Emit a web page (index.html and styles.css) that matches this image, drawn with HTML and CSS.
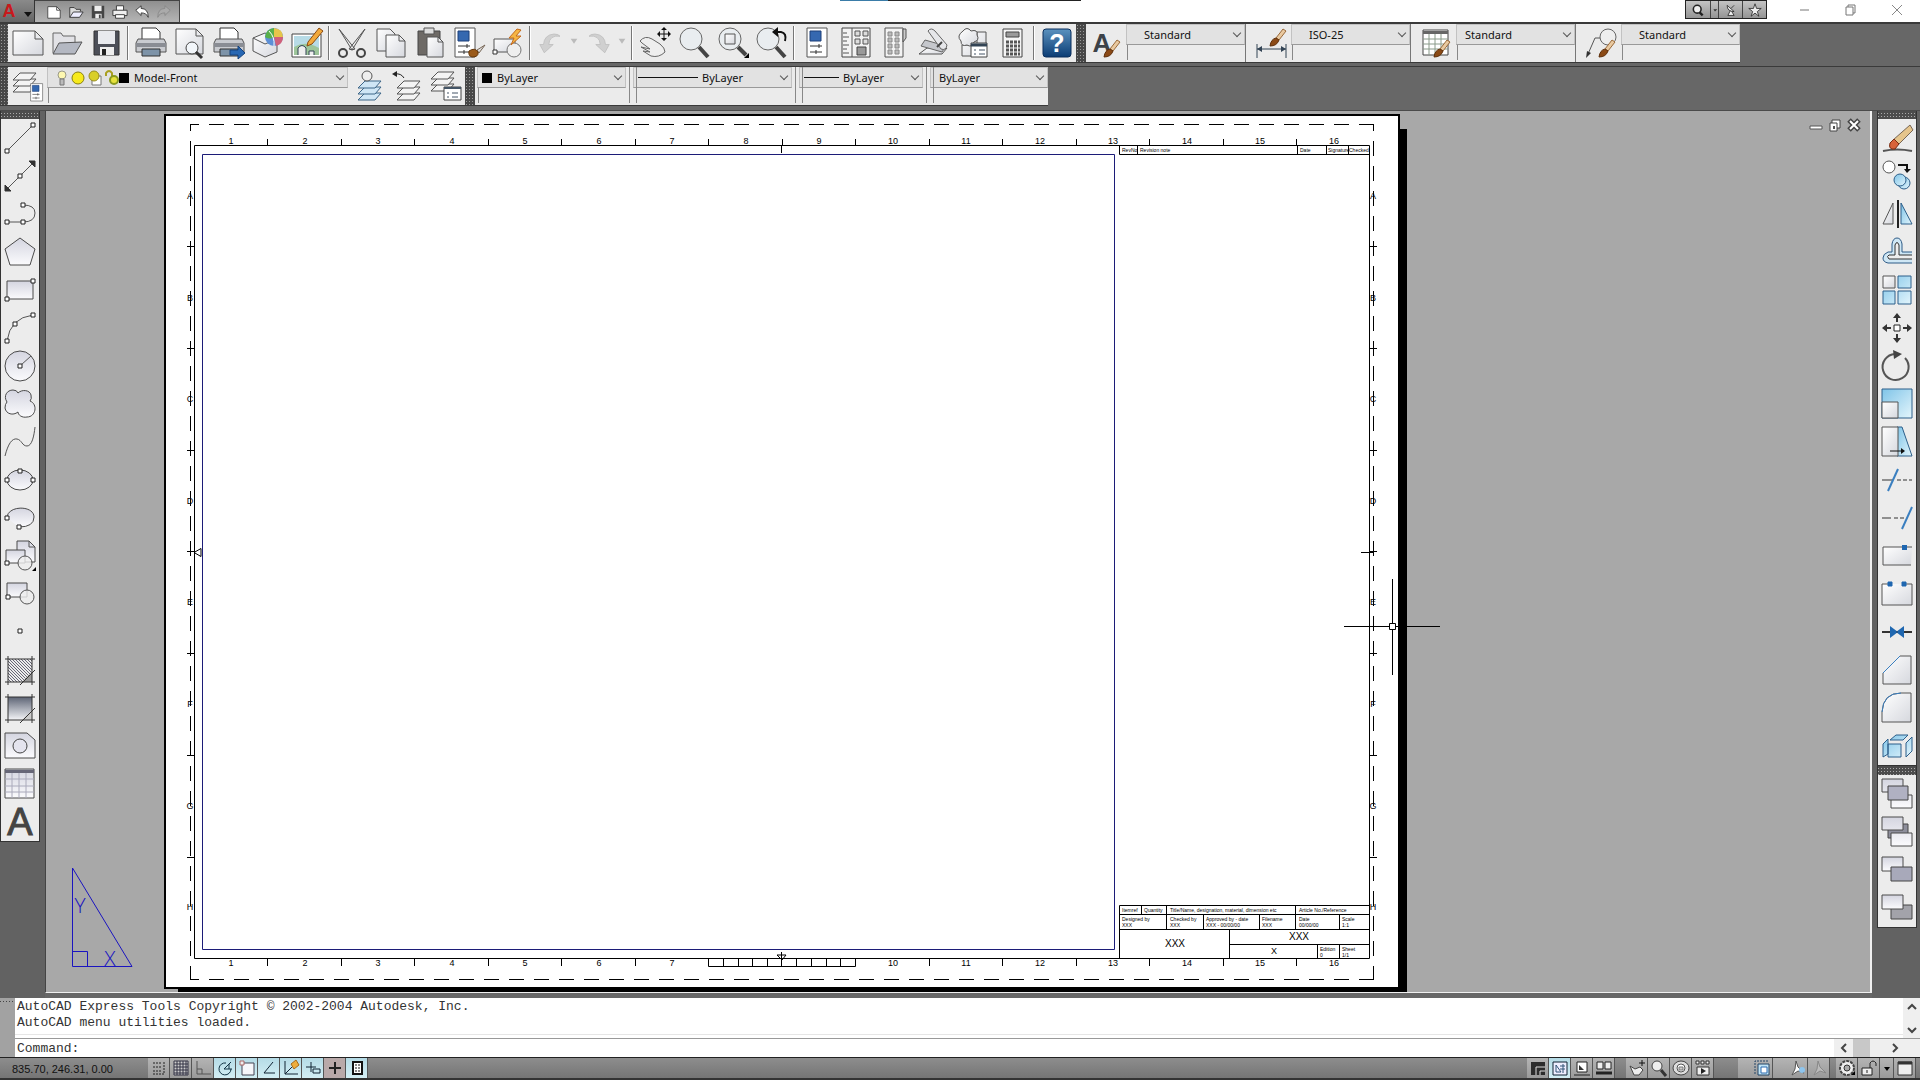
FILE: index.html
```html
<!DOCTYPE html>
<html lang="en">
<head>
    <meta charset="UTF-8">
    <meta name="viewport" content="width=device-width, initial-scale=1.0">
    <title>AutoCAD</title>
    <link rel="stylesheet" href="styles.css">
</head>
<body>
    <!-- Shared gradients and small symbols -->
    <svg class="defs" aria-hidden="true">
        <defs>
            <linearGradient id="paper" x1="0" y1="0" x2="1" y2="1"><stop offset="0" stop-color="#fff"/><stop offset="1" stop-color="#d6d8de"/></linearGradient>
            <linearGradient id="shade" x1="0" y1="0" x2="0" y2="1"><stop offset="0" stop-color="#d4d5e0"/><stop offset="1" stop-color="#fbfbfd"/></linearGradient>
            <linearGradient id="sky" x1="0" y1="0" x2="1" y2="1"><stop offset="0" stop-color="#7fc4e8"/><stop offset="1" stop-color="#e3f5fc"/></linearGradient>
            <linearGradient id="steel" x1="0" y1="0" x2="0" y2="1"><stop offset="0" stop-color="#5d6475"/><stop offset="1" stop-color="#f4f5f8"/></linearGradient>
            <linearGradient id="help" x1="0" y1="0" x2="0" y2="1"><stop offset="0" stop-color="#5b92bf"/><stop offset="1" stop-color="#0b3c74"/></linearGradient>
            <pattern id="hatch" width="3" height="3" patternUnits="userSpaceOnUse"><path d="M0 0l3 3" stroke="#667" stroke-width="1"/></pattern>
            <g id="brush"><path d="M13 0L6 9l3 2L16 2z" fill="#e9c9a0" stroke="#9a6a3a" stroke-width="1"/><path d="M6 9q-5 1-6 8 7 0 9-6z" fill="#8b4a16" stroke="#5e300c" stroke-width="1"/></g>
            <g id="layers"><path d="M8 17h16l-6 7H1z"/><path d="M8 11h16l-6 7H1z"/><path d="M8 5h16l-6 7H1z"/></g>
            <g id="printer"><path d="M7 1h14l4 4v8H7z" fill="#fff" stroke="#333"/><path d="M3 12h26l2 4v9H1v-9z" fill="#c9cbd0" stroke="#555"/><path d="M1 16h30v4H1z" fill="#8a8d94" stroke="none"/><path d="M7 22h18v7H7z" fill="#7d93a8" stroke="#333"/></g>
            <g id="palette"><path d="M6 1h20v29H6z" fill="#fff" stroke="#555"/><path d="M9 4h11v10H9z" fill="#3568b0" stroke="#1d3f78"/><path d="M9 19h12M18 17v4M9 25h12M15 23v4" stroke="#333"/></g>
        </defs>
    </svg>

    <header class="titlebar">
        <button class="app" aria-label="Application menu">
            <span class="logo">A</span>
            <svg width="8" height="6" viewBox="0 0 8 6"><path d="M0 0h8l-4 5z" fill="#111"/></svg>
        </button>
        <div class="quick">
            <button aria-label="New"><svg viewBox="0 0 18 18"><path d="M2 3h10l4 4v9H2z" fill="#fff" stroke="#444"/><path d="M12 3v4h4" fill="none" stroke="#444"/></svg></button>
            <button aria-label="Open"><svg viewBox="0 0 18 18"><path d="M2 15V4h5l2 2h5v2" fill="#ddd" stroke="#333"/><path d="M2 15l4-6h11l-4 6z" fill="#eef" stroke="#333"/></svg></button>
            <button aria-label="Save"><svg viewBox="0 0 18 18"><path d="M2 2h14v14H2z" fill="#444"/><path d="M5 2h8v6H5z" fill="#eee"/><path d="M6 11h7v5H6z" fill="#eee"/><path d="M10 12h2v4h-2z" fill="#444"/></svg></button>
            <button aria-label="Plot"><svg viewBox="0 0 18 18"><path d="M5 2h8v6H5z" fill="#fff" stroke="#333"/><path d="M1 7h16v6H1z" fill="#eee" stroke="#333"/><path d="M4 12h10v4H4z" fill="#fff" stroke="#333"/></svg></button>
            <button aria-label="Undo"><svg viewBox="0 0 18 18"><path d="M2 7l6-5v3q8 0 8 10-2-5-8-5v3z" fill="#fff" stroke="#333"/></svg></button>
            <button aria-label="Redo"><svg viewBox="0 0 18 18"><path d="M16 7l-6-5v3Q2 5 2 15q2-5 8-5v3z" fill="#aaa" stroke="#888"/></svg></button>
        </div>
        <div class="topline"><span></span></div>
        <div class="info">
            <button class="wide" aria-label="Search"><svg viewBox="0 0 18 18"><circle cx="8" cy="8" r="5" fill="#eee" stroke="#222" stroke-width="2"/><path d="M11 12l4 4" stroke="#222" stroke-width="3"/></svg></button>
            <button class="thin" aria-label="Search options"><svg viewBox="0 0 6 18"><path d="M1 8h5l-3 3z" fill="#333"/></svg></button>
            <button class="wide" aria-label="Communication center"><svg viewBox="0 0 18 18"><path d="M4 3q0 8 9 8zM9 7l4-4M8 10l-3 6h8l-3-5" fill="#eee" stroke="#222"/></svg></button>
            <button class="wide" aria-label="Favorites"><svg viewBox="0 0 18 18"><path d="M9 1l2 6h6l-5 4 2 6-5-4-5 4 2-6-5-4h6z" fill="#eee" stroke="#222"/></svg></button>
        </div>
        <div class="winbtns">
            <button aria-label="Minimize"><svg viewBox="0 0 12 12"><path d="M1 6h9" stroke="#777"/></svg></button>
            <button aria-label="Restore"><svg viewBox="0 0 12 12"><path d="M1 3h7v8H1zM3 3V1h7v8H8" fill="none" stroke="#777"/></svg></button>
            <button aria-label="Close"><svg viewBox="0 0 12 12"><path d="M1 1l10 10M11 1L1 11" stroke="#888"/></svg></button>
        </div>
    </header>

    <div class="bars">
        <div class="bar">
            <i class="grip"></i>
            <div class="tools">
                <button aria-label="New"><svg viewBox="0 0 32 32"><path class="w" d="M1 4h22l8 8v16H1z"/><path class="l" d="M23 4v8h8"/></svg></button>
                <button aria-label="Open"><svg viewBox="0 0 32 32"><path d="M2 26V6h8l2 3h12v8" fill="#e2e2e6" stroke="#666"/><path d="M2 27l6-11 23-1-7 12z" fill="#b4b8c2" stroke="#555"/></svg></button>
                <button aria-label="Save"><svg viewBox="0 0 32 32"><path d="M4 4h25v24H4z" fill="#4c4f58" stroke="#333"/><path d="M8 4h17v13H8z" fill="#e8eaee"/><path d="M10 20h14v8H10z" fill="#eee"/><path d="M12 22h4v6h-4z" fill="#222"/></svg></button>
                <i class="sep"></i>
                <button aria-label="Plot"><svg viewBox="0 0 32 32"><use href="#printer"/></svg></button>
                <button aria-label="Plot preview"><svg viewBox="0 0 32 32"><path class="w" d="M2 2h20l7 7v18H2z"/><path class="l" d="M22 2v7h7"/><circle cx="18" cy="21" r="6" fill="#f2f6fa" stroke="#444"/><path d="M22 25l6 6" stroke="#333" stroke-width="3"/></svg></button>
                <button aria-label="Publish"><svg viewBox="0 0 32 32"><use href="#printer"/><path d="M17 23h8v-4l7 7-7 6v-4h-8z" fill="#2767b3" stroke="#17437c"/></svg></button>
                <button aria-label="3DDWF"><svg viewBox="0 0 32 32"><path class="w" d="M1 11l12-5 12 6v13l-12 5-12-6z"/><path class="l" d="M1 11l12 6 12-5"/><circle cx="22" cy="10" r="9" fill="#5d8fd6"/><path d="M22 1q-8 1-9 9 5 3 9 0z" fill="#58b04a"/><path d="M22 1q9 1 9 9l-9 0z" fill="#e6c54a"/><path d="M31 10q0 7-7 9l-2-9z" fill="#d0607a"/><path d="M17 4q6 6 5 15" fill="none" stroke="#fff"/></svg></button>
                <button aria-label="Sheet set"><svg viewBox="0 0 32 32"><path d="M1 7h29v23H1z" fill="#fff" stroke="#444"/><path d="M3 9h25v19H3z" fill="#b7dbe6"/><path d="M3 20q12-7 25 1v7H3z" fill="#9dc59a"/><path d="M7 28v-7q4-5 8 0v7M18 28v-4h5v4" fill="#eee" stroke="#345"/><path d="M17 15l11-14 4 3-11 13-5 2z" fill="#f2a93b" stroke="#8a4a12"/></svg></button>
                <i class="sep"></i>
                <button aria-label="Cut"><svg viewBox="0 0 32 32"><path d="M3 2l16 20-3 1zM29 2L13 22l3 1z" fill="#ececec" stroke="#555"/><circle cx="7" cy="26" r="4" fill="none" stroke="#444" stroke-width="2"/><circle cx="25" cy="26" r="4" fill="none" stroke="#444" stroke-width="2"/></svg></button>
                <button aria-label="Copy"><svg viewBox="0 0 32 32"><path class="w" d="M2 2h13l5 5v17H2z"/><path class="w" d="M11 8h13l6 6v16H11z"/><path class="l" d="M24 8v6h6"/></svg></button>
                <button aria-label="Paste"><svg viewBox="0 0 32 32"><path d="M4 4h22v24H4z" fill="#6e6a66" stroke="#444"/><path d="M10 1h10v6H10z" fill="#ddd" stroke="#555"/><path class="w" d="M13 10h11l5 5v15H13z"/><path class="l" d="M24 10v5h5"/></svg></button>
                <button aria-label="Match properties"><svg viewBox="0 0 32 32"><g transform="translate(-4 0)"><use href="#palette"/></g><path d="M32 18l-8 5 2 3z" fill="#ddd" stroke="#765"/><path d="M16 24q6-4 9 1 1 5-6 5-4-1-3-6z" fill="#9a5a1a" stroke="#653608"/></svg></button>
                <button aria-label="Block editor"><svg viewBox="0 0 32 32"><path class="w" d="M2 12h21v13H2z"/><circle cx="22" cy="23" r="7" fill="#eee" stroke="#777"/><path d="M25 2l-8 9h5l-3 7 10-9h-5l5-6z" fill="#f5b544" stroke="#c46a1c"/><path d="M1 23h4v4H1z" fill="#fff" stroke="#333"/></svg></button>
                <i class="sep"></i>
                <button class="hist" aria-label="Undo"><svg viewBox="0 0 32 32"><path d="M7 29L1 18h5Q7 5 20 4q6 0 8 3-14-2-15 11h6z" fill="#d0d0d0" stroke="#bbb"/></svg></button>
                <button class="drop" aria-label="Undo list"><svg viewBox="0 0 12 32"><path d="M2 11h8l-4 6z" fill="#bbb"/></svg></button>
                <button class="hist" aria-label="Redo"><svg viewBox="0 0 32 32"><path d="M25 29l6-11h-5Q25 5 12 4 6 4 4 7q14-2 15 11h-6z" fill="#d0d0d0" stroke="#bbb"/></svg></button>
                <button class="drop last" aria-label="Redo list"><svg viewBox="0 0 12 32"><path d="M2 11h8l-4 6z" fill="#bbb"/></svg></button>
                <i class="sep"></i>
                <button aria-label="Pan"><svg viewBox="0 0 32 32"><path d="M1 14q5-6 12-2l8 5q5 4 5 8-6 6-14 4L4 24l7 1-9-5 9 2-8-6z" fill="#eee" stroke="#666"/><path d="M25 1v12M19 7h12" stroke="#111"/><path d="M25 0l-3 3h6zM25 14l-3-3h6zM18 7l3-3v6zM32 7l-3-3v6z" fill="#111"/></svg></button>
                <button aria-label="Zoom realtime"><svg viewBox="0 0 32 32"><path d="M21 20l9 10" stroke="#444" stroke-width="4"/><circle cx="13" cy="12" r="11" fill="#e9edf0" stroke="#666"/></svg></button>
                <button aria-label="Zoom window"><svg viewBox="0 0 32 32"><path d="M21 20l8 8" stroke="#444" stroke-width="4"/><circle cx="13" cy="12" r="11" fill="#e9edf0" stroke="#666"/><path class="w" d="M8 7h10v10H8z"/><path d="M32 26v5h-5z" fill="#000"/></svg></button>
                <button aria-label="Zoom previous"><svg viewBox="0 0 32 32"><path d="M20 20l9 10" stroke="#444" stroke-width="4"/><circle cx="12" cy="12" r="11" fill="#e9edf0" stroke="#666"/><path d="M20 5h5q6 1 4 9" fill="none" stroke="#111" stroke-width="2"/><path d="M22 0v10l-6-5z" fill="#111"/></svg></button>
                <i class="sep"></i>
                <button aria-label="Properties"><svg viewBox="0 0 32 32"><use href="#palette"/></svg></button>
                <button aria-label="DesignCenter"><svg viewBox="0 0 32 32"><path d="M2 1h28v29H2z" fill="#f3f3f3" stroke="#444"/><path d="M12 1v29M3 6h4M3 10h6M3 14h4M3 18h6M3 22h4M3 26h6" stroke="#555"/><path d="M15 4h5v5h-5zM23 4h5v5h-5zM15 12h5v5h-5zM23 12h5v5h-5z" fill="#ddd" stroke="#555"/><path d="M17 20h9v8h-9z" fill="#999" stroke="#444"/></svg></button>
                <button aria-label="Tool palettes"><svg viewBox="0 0 32 32"><path d="M6 1h18v29H6z" fill="#f3f3f3" stroke="#555"/><path d="M24 2h3v9l-3 4z" fill="#ccc" stroke="#555"/><path d="M9 5h4v4H9zM16 5h4v4h-4zM9 11h4v4H9zM16 11h4v4h-4zM9 17h4v4H9zM16 17h4v4h-4zM9 23h4v4H9zM16 23h4v4h-4z" fill="#bbb" stroke="#888"/></svg></button>
                <button aria-label="Sheet set manager"><svg viewBox="0 0 32 32"><path class="w" d="M1 27l8-6h20l-5 6z"/><path d="M3 19l4-6 21 6-4 6z" fill="#c5c7cc" stroke="#666"/><path d="M10 4q3-4 7 0l12 14q-1 6-6 4z" fill="#e6e7ea" stroke="#666"/><path d="M24 15l-5 5" stroke="#444" stroke-width="2"/></svg></button>
                <button aria-label="Markup set manager"><svg viewBox="0 0 32 32"><path class="w" d="M20 5h9v14h-9zM5 18h12v11H5z"/><path class="w" d="M6 4q4-5 8 0 7-2 6 4 3 5-3 7-2 6-7 3-6 2-6-4-5-5 2-10z"/><path d="M14 16h16v14H14z" fill="#fff" stroke="#444"/><path d="M14 18h16" stroke="#345" stroke-width="3"/><path d="M17 23h2M22 23h6M17 27h2M22 27h6" stroke="#456"/></svg></button>
                <button aria-label="QuickCalc"><svg viewBox="0 0 32 32"><path d="M7 2h19v28H7z" fill="#f5f5f5" stroke="#444"/><path d="M10 5h13v5H10z" fill="#9a9a9a" stroke="#444"/><path d="M10 15h14M10 19h14M10 23h14M10 27h14" stroke="#555" stroke-width="3" stroke-dasharray="3 1"/></svg></button>
                <i class="sep"></i>
                <button aria-label="Help"><svg viewBox="0 0 32 32"><rect x="2" y="2" width="28" height="28" rx="3" fill="url(#help)" stroke="#0a2f5c"/><text class="qmark" x="16" y="25">?</text></svg></button>
            </div>
            <i class="grip mid"></i>
            <div class="tools styles">
                <button aria-label="Text style"><svg viewBox="0 0 32 32"><text class="glyph" x="12" y="25">A</text><use href="#brush" x="14" y="13"/></svg></button>
                <label class="field"><select aria-label="Text style"><option>Standard</option></select></label>
                <button aria-label="Dimension style"><svg viewBox="0 0 32 32"><path d="M2 17v14M31 17v14M2 22h29" stroke="#345"/><path d="M2 22l5-3v6zM31 22l-5-3v6z" fill="#345"/><use href="#brush" x="15" y="2"/></svg></button>
                <label class="field"><select aria-label="Dimension style"><option>ISO-25</option></select></label>
                <button aria-label="Table style"><svg viewBox="0 0 32 32"><path d="M3 3h25v25H3z" fill="#fff" stroke="#444"/><path d="M3 4h25v3H3z" fill="#666"/><path d="M3 12h25M3 17h25M3 22h25M9 7v21M15 7v21M21 7v21" stroke="#8a9a8a"/><use href="#brush" x="14" y="13"/></svg></button>
                <label class="field near"><select aria-label="Table style"><option>Standard</option></select></label>
                <button aria-label="Multileader style"><svg viewBox="0 0 32 32"><circle cx="23" cy="10" r="8" fill="#eee" stroke="#666"/><path d="M15 11h-5L3 27" fill="none" stroke="#555"/><path d="M1 31l1-7 4 2z" fill="#333"/><use href="#brush" x="14" y="13"/></svg></button>
                <label class="field"><select aria-label="Multileader style"><option>Standard</option></select></label>
            </div>
        </div>

        <div class="bar">
            <i class="grip"></i>
            <div class="tools">
                <button aria-label="Layer properties"><svg viewBox="0 0 32 32"><g class="stack"><use href="#layers" y="-2"/></g><g transform="translate(15 13) scale(.6)"><use href="#palette"/></g></svg></button>
                <label class="field layer">
                    <svg width="64" height="18" viewBox="0 0 64 18"><circle cx="7" cy="6" r="4" fill="#fdf7b0" stroke="#998"/><path d="M5 10h4v6H5z" fill="#bbb" stroke="#777"/><circle cx="23" cy="9" r="6" fill="#f7ea1c" stroke="#887f10"/><path d="M37 7h9v9h-9z" fill="#fff" stroke="#777"/><circle cx="39" cy="7" r="5" fill="#d9cf2a" stroke="#998f20"/><path d="M51 7V4q3-4 6 0v4" fill="none" stroke="#aaa020" stroke-width="2"/><circle cx="59" cy="11" r="4" fill="#e6e23c" stroke="#8a9a20" stroke-width="2"/></svg>
                    <i class="swatch"></i>
                    <select aria-label="Layer"><option>Model-Front</option></select>
                </label>
                <button aria-label="Make object's layer current"><svg viewBox="0 0 32 32"><g class="stack blue"><use href="#layers" x="5" y="6"/></g><circle cx="15" cy="6" r="5" fill="#eee" stroke="#555"/></svg></button>
                <button aria-label="Layer previous"><svg viewBox="0 0 32 32"><g class="stack"><use href="#layers" x="5" y="6"/></g><path d="M4 4q6-1 9 4" fill="none" stroke="#222"/><path d="M6 1v6L1 4z" fill="#222"/></svg></button>
                <button aria-label="Layer states"><svg viewBox="0 0 32 32"><g class="stack"><use href="#layers" y="-3"/></g><path d="M14 17h17v13H14z" fill="#fff" stroke="#444"/><path d="M14 18h17" stroke="#456" stroke-width="2"/><path d="M17 23h2M22 23h6M17 27h2M22 27h6" stroke="#456"/></svg></button>
            </div>
            <i class="grip mid"></i>
            <div class="tools props">
                <label class="field color"><i class="swatch"></i><select aria-label="Color"><option>ByLayer</option></select></label>
                <label class="field ltype"><i class="rule"></i><select aria-label="Linetype"><option>ByLayer</option></select></label>
                <label class="field lweight"><i class="rule"></i><select aria-label="Lineweight"><option>ByLayer</option></select></label>
                <label class="field plot"><select aria-label="Plot style"><option>ByLayer</option></select></label>
            </div>
        </div>
    </div>

    <main class="work">
        <aside class="dock">
            <div class="palette draw">
                <i class="cap"></i>
                <button aria-label="Line"><svg viewBox="0 0 32 32"><path class="s" d="M3 29L29 3"/><path class="n" d="M1 27h4v4H1zM27 1h4v4h-4z"/></svg></button>
                <button aria-label="Construction line"><svg viewBox="0 0 32 32"><path class="s" d="M3 29L29 3"/><path d="M31 1v6l-6-6zM1 31v-6l6 6z" fill="#333" stroke="#333"/><path class="n" d="M14 14h4v4h-4z"/></svg></button>
                <button aria-label="Polyline"><svg viewBox="0 0 32 32"><path class="s" d="M3 24h16q12 0 12-9 0-8-12-8"/><path class="n" d="M1 22h4v4H1zM17 22h4v4h-4zM17 5h4v4h-4z"/></svg></button>
                <button aria-label="Polygon"><svg viewBox="0 0 32 32"><path class="g" d="M16 2l15 11-5 16H6L1 13z"/></svg></button>
                <button aria-label="Rectangle"><svg viewBox="0 0 32 32"><path class="g" d="M3 7h26v18H3z"/><path class="n" d="M1 23h4v4H1zM27 5h4v4h-4z"/></svg></button>
                <button aria-label="Arc"><svg viewBox="0 0 32 32"><path class="s" d="M3 29Q6 6 29 3"/><path class="n" d="M1 27h4v4H1zM9 10h4v4H9zM27 1h4v4h-4z"/></svg></button>
                <button aria-label="Circle"><svg viewBox="0 0 32 32"><circle class="g" cx="16" cy="16" r="15"/><path d="M17 15l10-9" stroke="#555"/><path class="n" d="M14 14h4v4h-4z"/></svg></button>
                <button aria-label="Revision cloud"><svg viewBox="0 0 32 32"><path class="g" d="M3 14C-1 8 3 2 9 2q4 0 5 3c4-4 12-3 13 2q1 4-1 6c8 3 6 16-3 16-5 1-9-2-9-5-5 4-12 2-13-4q0-4 2-6z"/></svg></button>
                <button aria-label="Spline"><svg viewBox="0 0 32 32"><path class="s" d="M1 30C4 18 8 12 13 13S18 20 23 20 30 10 31 1"/></svg></button>
                <button aria-label="Ellipse"><svg viewBox="0 0 32 32"><ellipse class="g" cx="16" cy="16" rx="13" ry="10"/><path class="n" d="M1 14h4v4H1zM27 14h4v4h-4zM14 5h4v4h-4z"/></svg></button>
                <button aria-label="Ellipse arc"><svg viewBox="0 0 32 32"><path class="g" d="M3 16C3 3 30 3 30 15q0 10-15 10"/><path class="n" d="M1 14h4v4H1zM13 23h4v4h-4z"/></svg></button>
                <button aria-label="Insert block"><svg viewBox="0 0 32 32"><path class="g" d="M13 1h12l6 6v15H13z"/><path class="l" d="M25 1v6h6"/><path class="g" d="M2 10h19v13H2z"/><circle cx="21" cy="23" r="7" fill="#eeec" stroke="#555"/><path class="n" d="M1 21h4v4H1z"/><path d="M32 27v4h-4z" fill="#000"/></svg></button>
                <button aria-label="Make block"><svg viewBox="0 0 32 32"><path class="g" d="M3 5h20v14H3z"/><circle cx="23" cy="19" r="7" fill="#eeec" stroke="#555"/><path class="n" d="M2 17h4v4H2z"/></svg></button>
                <button aria-label="Point"><svg viewBox="0 0 32 32"><path class="n" d="M14 13h4v4h-4z"/></svg></button>
                <button aria-label="Hatch"><svg viewBox="0 0 32 32"><path d="M4 5h24v23H4z" fill="url(#hatch)"/><path d="M28 18L18 28h10z" fill="#999"/><path d="M1 5h30M1 28h30M4 2v29M28 2v29M31 16L16 31" stroke="#333" fill="none"/></svg></button>
                <button aria-label="Gradient"><svg viewBox="0 0 32 32"><path d="M4 5h24v23H4z" fill="url(#steel)"/><path d="M28 18L18 28h10z" fill="#ccc"/><path d="M1 5h30M1 28h30M4 2v29M28 2v29M31 16L16 31" stroke="#333" fill="none"/></svg></button>
                <button aria-label="Region"><svg viewBox="0 0 32 32"><path class="g" d="M1 3h22l8 7v18H1z"/><circle cx="16" cy="16" r="7" fill="#e4e4ee" stroke="#444"/></svg></button>
                <button aria-label="Table"><svg viewBox="0 0 32 32"><path class="g" d="M1 1h29v29H1z"/><path d="M1 2h29v3H1z" fill="#667"/><path d="M1 11h29M1 18h29M1 24h29M8 5v25M15 5v25M22 5v25" stroke="#aab"/></svg></button>
                <button aria-label="Multiline text"><svg viewBox="0 0 32 32"><text class="big" x="16" y="29">A</text></svg></button>
            </div>
        </aside>

        <section class="view">
            <svg class="sheet" width="100%" height="100%">
                <g transform="translate(-46 -111)">
                    <path d="M1400 129h7v863H178v-4h1222z" fill="#000"/>
                    <path d="M165 115h1234v873H165z" fill="#fff" stroke="#000" stroke-width="2"/>
                    <path class="dash" d="M190 124.500h1184M190 979.500h1184" stroke-dashoffset="6"/>
                    <path class="dash" d="M190.500 124v855M1373.500 124v855" stroke-dashoffset="8"/>
                    <path class="k" d="M194.500 145.500h1175v813h-1175z"/>
                    <path class="navy" d="M202.500 154.500h912v795h-912z"/>
                    <!-- centre marks and scale bar -->
                    <path class="k" d="M781.500 145v8M781.500 952v10M777 955h9l-4 5zM1361 552.500h12M201 548.500v8l-7-4z"/>
                    <path class="k" d="M708.500 959v7.500h147v-7.500M723.500 959v7M738.500 959v7M752.500 959v7M767.500 959v7M781.500 959v7M796.500 959v7M811.500 959v7M826.500 959v7M840.500 959v7"/>
                    <g id="ruler"></g>
                    <!-- revision strip -->
                    <path class="k" d="M1119.500 145v9.500h250M1137.500 145v9M1297.500 145v9M1326.500 145v9M1348.500 145v9"/>
                    <g class="tiny">
                        <text x="1122" y="152">RevNo</text><text x="1140" y="152">Revision note</text><text x="1300" y="152">Date</text><text x="1328" y="152">Signature</text><text x="1349" y="152">Checked</text>
                    </g>
                    <!-- title block -->
                    <path class="k" d="M1119.500 958v-52.500h250M1119 914.500h250M1119 929.500h250M1229.500 944.500h140M1141.500 905v9M1166.500 905v24M1203.500 914v15M1259.500 914v15M1295.500 905v24M1339.500 914v15M1229.500 929v29M1317.500 944v14M1339.500 944v14"/>
                    <g class="tiny">
                        <text x="1122" y="912">Itemref</text><text x="1144" y="912">Quantity</text><text x="1170" y="912">Title/Name, designation, material, dimension etc</text><text x="1299" y="912">Article No./Reference</text>
                        <text x="1122" y="921">Designed by</text><text x="1170" y="921">Checked by</text><text x="1206" y="921">Approved by - date</text><text x="1262" y="921">Filename</text><text x="1299" y="921">Date</text><text x="1342" y="921">Scale</text>
                        <text x="1122" y="927">XXX</text><text x="1170" y="927">XXX</text><text x="1206" y="927">XXX - 00/00/00</text><text x="1262" y="927">XXX</text><text x="1299" y="927">00/00/00</text><text x="1342" y="927">1:1</text>
                        <text x="1320" y="951">Edition</text><text x="1320" y="957">0</text><text x="1342" y="951">Sheet</text><text x="1342" y="957">1/1</text>
                    </g>
                    <text class="mark" x="1175" y="947">XXX</text>
                    <text class="mark" x="1299" y="940">XXX</text>
                    <text class="num" x="1274" y="954">X</text>
                    <!-- crosshair -->
                    <path class="k" d="M1344 626.500h45M1396 626.500h44M1392.500 579v44M1392.500 630v45M1389.500 623.500h6v6h-6z"/>
                    <!-- UCS icon -->
                    <path class="ucs" d="M72.500 868v98.500H132zM72 951.500h15.500v15"/>
                    <text class="axis" x="80" y="913">Y</text>
                    <text class="axis" x="110" y="966">X</text>
                </g>
            </svg>
            <div class="docbtns">
                <button aria-label="Minimize drawing"><svg viewBox="0 0 14 14"><path d="M1 8h12v3H1z" fill="#fff" stroke="#555"/></svg></button>
                <button aria-label="Restore drawing"><svg viewBox="0 0 14 14"><path d="M4 2h8v8H4z" fill="#fff" stroke="#444"/><path d="M2 5h7v8H2z" fill="#fff" stroke="#444"/><path d="M5 8h2v3H5z" fill="#555"/></svg></button>
                <button aria-label="Close drawing"><svg viewBox="0 0 14 14"><path d="M2 2l10 10M12 2L2 12" stroke="#444" stroke-width="5"/><path d="M3 3l8 8M11 3l-8 8" stroke="#fff" stroke-width="2"/></svg></button>
            </div>
        </section>

        <aside class="dock right">
            <div class="palette modify">
                <i class="cap"></i>
                <button aria-label="Erase"><svg viewBox="0 0 32 32"><path d="M2 29q14-3 29 0" stroke="#555" stroke-width="2" fill="none"/><path d="M12 18L29 3l3 5-15 15z" fill="#e6c58c" stroke="#765"/><path d="M9 21l4-4 5 5-4 5q-7 1-5-6z" fill="#d8643a" stroke="#7a2d12"/></svg></button>
                <button aria-label="Copy"><svg viewBox="0 0 32 32"><circle cx="8" cy="7" r="6" fill="#fff" stroke="#555"/><path d="M17 5h9v5" fill="none" stroke="#111" stroke-width="2"/><path d="M23 9h7l-4 4z" fill="#111"/><circle class="b" cx="23" cy="23" r="6"/><circle class="b" cx="19" cy="20" r="6"/></svg></button>
                <button aria-label="Mirror"><svg viewBox="0 0 32 32"><path class="w" d="M12 5v21H2z"/><path d="M17 2v28" stroke="#222" stroke-width="2"/><path class="b" d="M20 5v21h11z"/></svg></button>
                <button aria-label="Offset"><svg viewBox="0 0 32 32"><path d="M31 27H7q-5-1-5-5t5-6h4V8q1-6 5-6t5 6v8h10" fill="#cfe7f5" stroke="#2d5a86"/><path d="M31 23H8q-3-3 0-4h6V9q2-5 4 0v10h13" fill="#eee" stroke="#333"/></svg></button>
                <button aria-label="Array"><svg viewBox="0 0 32 32"><path class="w" d="M2 2h12v12H2z"/><path class="b" d="M17 2h13v12H17zM2 17h12v13H2zM17 17h13v13H17z"/></svg></button>
                <button aria-label="Move"><svg viewBox="0 0 32 32"><path class="n" d="M13 13h6v6h-6z"/><path d="M16 1l4 5h-3v4h-2V6h-3zM16 31l4-5h-3v-4h-2v4h-3zM1 16l5-4v3h4v2H6v3zM31 16l-5-4v3h-4v2h4v3z" fill="#333"/></svg></button>
                <button aria-label="Rotate"><svg viewBox="0 0 32 32"><path d="M24 8a13 13 0 1 1-10-4" fill="none" stroke="#555" stroke-width="2"/><path d="M12 0l9 4-8 5z" fill="#444"/></svg></button>
                <button aria-label="Scale"><svg viewBox="0 0 32 32"><path class="b" d="M1 1h30v29H1z"/><path class="w" d="M1 14h16v16H1z"/></svg></button>
                <button aria-label="Stretch"><svg viewBox="0 0 32 32"><path class="b" d="M16 1h5l10 29H16z"/><path class="w" d="M1 1h16v29H1z"/><path d="M9 25h12" stroke="#111" stroke-width="1"/><path d="M20 22l4 3-4 3z" fill="#111"/></svg></button>
                <button aria-label="Trim"><svg viewBox="0 0 32 32"><path d="M1 16h11" stroke="#333"/><path d="M16 16h15" stroke="#333" stroke-dasharray="4 2"/><path d="M17 5L7 27" stroke="#3a7fc0" stroke-width="2"/></svg></button>
                <button aria-label="Extend"><svg viewBox="0 0 32 32"><path d="M1 16h9" stroke="#333"/><path d="M13 16h12" stroke="#333" stroke-dasharray="4 2"/><path d="M31 5L21 27" stroke="#3a7fc0" stroke-width="2"/></svg></button>
                <button aria-label="Break at point"><svg viewBox="0 0 32 32"><path class="w" d="M31 7H2v18h28"/><path d="M21 5h5v5h-5z" fill="#1f67b0"/></svg></button>
                <button aria-label="Break"><svg viewBox="0 0 32 32"><path class="w" d="M9 6H1v21h30V6h-8"/><path d="M7 4h4v4H7zM21 4h4v4h-4z" fill="#1f67b0" stroke="#1f67b0"/></svg></button>
                <button aria-label="Join"><svg viewBox="0 0 32 32"><path d="M1 16h30" stroke="#333" stroke-width="2"/><path d="M9 10l8 6-8 6zM23 10l-8 6 8 6z" fill="#1f67b0"/></svg></button>
                <button aria-label="Chamfer"><svg viewBox="0 0 32 32"><path class="w" d="M2 19L19 2h11v28H2z"/><path d="M2 19L19 2" stroke="#3a7fc0"/></svg></button>
                <button aria-label="Fillet"><svg viewBox="0 0 32 32"><path class="w" d="M1 20Q2 1 20 1h10v29H1z"/><path d="M1 20Q2 1 20 1" fill="none" stroke="#3a7fc0"/></svg></button>
                <button aria-label="Explode"><svg viewBox="0 0 32 32"><path class="b" d="M15 5h12l-5 5H9zM2 14l5-5v15l-5 3zM25 13l6-6v14l-6 6zM7 14h13v13H7z"/></svg></button>
            </div>
            <div class="palette modify">
                <i class="cap"></i>
                <button aria-label="Bring to front"><svg viewBox="0 0 32 32"><path class="g" d="M1 1h21v13H1zM10 17h21v13H10z"/><path d="M7 8h20v14H7z" fill="#b0b1c2" stroke="#444"/></svg></button>
                <button aria-label="Send to back"><svg viewBox="0 0 32 32"><path d="M7 8h20v14H7z" fill="#8e8f9c" stroke="#444"/><path class="g" d="M1 1h21v13H1zM10 17h21v13H10z"/></svg></button>
                <button aria-label="Bring above objects"><svg viewBox="0 0 32 32"><path class="g" d="M1 3h21v14H1z"/><path d="M10 13h21v14H10z" fill="#a8a9ba" stroke="#444"/></svg></button>
                <button aria-label="Send under objects"><svg viewBox="0 0 32 32"><path d="M10 13h21v14H10z" fill="#a3a3aa" stroke="#444"/><path class="g" d="M1 3h21v14H1z"/></svg></button>
            </div>
        </aside>
    </main>

    <section class="command">
        <i class="handle"></i>
        <div class="console">
            <div class="history">
                <div class="log">
                    <p>AutoCAD Express Tools Copyright © 2002-2004 Autodesk, Inc.</p>
                    <p>AutoCAD menu utilities loaded.</p>
                </div>
                <div class="vscroll">
                    <button aria-label="Scroll up"><svg viewBox="0 0 10 10"><path d="M1 7l4-4 4 4"/></svg></button>
                    <button aria-label="Scroll down"><svg viewBox="0 0 10 10"><path d="M1 3l4 4 4-4"/></svg></button>
                </div>
            </div>
            <div class="prompt">
                <label for="cmd">Command:</label>
                <input id="cmd" type="text">
                <div class="hscroll">
                    <button aria-label="Scroll left"><svg viewBox="0 0 10 10"><path d="M7 1L3 5l4 4"/></svg></button>
                    <i></i>
                    <button aria-label="Scroll right"><svg viewBox="0 0 10 10"><path d="M3 1l4 4-4 4"/></svg></button>
                </div>
            </div>
        </div>
    </section>

    <footer class="status">
        <span class="coords">835.70, 246.31, 0.00</span>
        <div class="group">
            <button aria-label="Snap"><svg viewBox="0 0 18 18"><path d="M3 4h8M3 8h8M3 12h8M3 15h12M14 3v12" stroke="#222" stroke-dasharray="2 1" fill="none"/></svg></button>
            <button aria-label="Grid"><svg viewBox="0 0 18 18"><path d="M2 2h14v14H2zM5 2v14M8 2v14M11 2v14M14 2v14M2 5h14M2 8h14M2 11h14M2 14h14" stroke="#334" fill="#ccc"/></svg></button>
            <button aria-label="Ortho"><svg viewBox="0 0 18 18"><path d="M3 2v13h14M3 10h5v5" stroke="#555" fill="none"/></svg></button>
            <button class="on" aria-label="Polar"><svg viewBox="0 0 18 18"><path d="M15 10a6 6 0 1 1-5-6M8 10h8M8 10l7-7M13 5v5" stroke="#134" fill="none"/></svg></button>
            <button class="on" aria-label="Object snap"><svg viewBox="0 0 18 18"><path d="M4 4h12v12H4z" fill="#f6f6fa" stroke="#445"/><path d="M2 2h4v4H2z" fill="#eee" stroke="#a66"/></svg></button>
            <button class="on" aria-label="Object snap tracking"><svg viewBox="0 0 18 18"><path d="M13 3L4 14h11" stroke="#123" fill="none"/></svg></button>
            <button class="on" aria-label="Dynamic UCS"><svg viewBox="0 0 18 18"><path d="M3 2v13h13M3 15l8-8" stroke="#123" fill="none"/><path d="M9 5l5-4 3 5-5 4z" fill="#eead3c" stroke="#a76a18"/></svg></button>
            <button class="on" aria-label="Dynamic input"><svg viewBox="0 0 18 18"><path d="M2 8h10M7 3v10M9 10h7v4H9z" stroke="#123" fill="none"/></svg></button>
            <button class="rose" aria-label="Lineweight"><svg viewBox="0 0 18 18"><path d="M3 9h12M9 3v12" stroke="#222" stroke-width="2"/></svg></button>
            <button class="on" aria-label="Quick properties"><svg viewBox="0 0 18 18"><path d="M5 3h9v12H5z" fill="#fff" stroke="#111" stroke-width="2"/><path d="M7 6h5M7 9h5M7 12h5" stroke="#111" stroke-dasharray="2 1"/></svg></button>
        </div>
        <div class="group push">
            <button aria-label="Model"><svg viewBox="0 0 18 18"><path d="M2 3h14v13H2z" fill="#2c2c2c"/><path d="M7 16V8h9M11 16v-4h5" fill="none" stroke="#ddd"/></svg></button>
            <button class="on" aria-label="Layout"><svg viewBox="0 0 18 18"><path d="M2 3h14v13H2z" fill="#eef" stroke="#123"/><path d="M5 6v7h5zM12 5v9M9 7h5M9 10h5" fill="none" stroke="#357"/></svg></button>
            <button aria-label="Quick view layouts"><svg viewBox="0 0 18 18"><path d="M4 3h10v10H4z" fill="#fff" stroke="#222"/><path d="M6 6v5h5z" fill="#333"/><path d="M1 16h16" stroke="#222"/></svg></button>
            <button aria-label="Quick view drawings"><svg viewBox="0 0 18 18"><path d="M2 3h6v7H2zM10 3h6v7h-6z" fill="#eee" stroke="#222"/><path d="M1 14h16" stroke="#222" stroke-width="3"/></svg></button>
        </div>
        <div class="group gap">
            <button aria-label="Pan"><svg viewBox="0 0 18 18"><path d="M2 7l5 3 5-2 3 3-4 5H6z" fill="#eee" stroke="#444"/><path d="M14 1v6M11 4h6" stroke="#111"/></svg></button>
            <button aria-label="Zoom"><svg viewBox="0 0 18 18"><path d="M11 11l5 6" stroke="#333" stroke-width="3"/><circle cx="7" cy="7" r="5" fill="#eee" stroke="#444"/></svg></button>
            <button aria-label="Steering wheel"><svg viewBox="0 0 18 18"><ellipse cx="9" cy="9" rx="8" ry="7" fill="#ddd" stroke="#444"/><circle cx="9" cy="9" r="4" fill="#fff" stroke="#555"/><path d="M7 8h4v3H7z" fill="#ccc" stroke="#777"/></svg></button>
            <button aria-label="ShowMotion"><svg viewBox="0 0 18 18"><path d="M2 2h3v3H2zM7 2h3v3H7zM12 2h3v3h-3zM3 8h12v8H3z" fill="#eee" stroke="#333"/><path d="M7 9l5 3-5 3z" fill="#222"/></svg></button>
        </div>
        <div class="group gap2 lone">
            <button aria-label="Maximize viewport"><svg viewBox="0 0 18 18"><path d="M5 5h11v11H5z" fill="#bfe3f5" stroke="#246"/><path d="M8 8h6v6H8z" fill="#fff" stroke="#2a6ab0"/><path d="M2 15V2h14" fill="none" stroke="#246" stroke-dasharray="2 1"/></svg></button>
        </div>
        <div class="group">
            <button aria-label="Annotation visibility"><svg viewBox="0 0 18 18"><path d="M8 2l2 6 6 6-6-2-6 4 3-6z" fill="#fff" stroke="#555"/><circle cx="14" cy="11" r="3" fill="#8ec5ee"/></svg></button>
            <button aria-label="Annotation scales"><svg viewBox="0 0 18 18"><path d="M8 2l2 6 6 6-6-2-6 4 3-6z" fill="#bbb" stroke="#888"/></svg></button>
        </div>
        <div class="group gap3">
            <button aria-label="Workspace switching"><svg viewBox="0 0 18 18"><circle cx="9" cy="9" r="7" fill="#eee" stroke="#444" stroke-width="2" stroke-dasharray="3 1"/><circle cx="9" cy="9" r="3" fill="#aaa" stroke="#333"/><path d="M17 12v4h-4z" fill="#000"/></svg></button>
            <button aria-label="Lock toolbars"><svg viewBox="0 0 18 18"><path d="M2 9h10v7H2z" fill="#eee" stroke="#222"/><path d="M10 9V4q3-4 6 0v3" fill="none" stroke="#222"/><path d="M7 11v3" stroke="#222"/></svg></button>
            <button class="arrow" aria-label="Status bar menu"><svg viewBox="0 0 10 18"><path d="M2 8h6l-3 4z" fill="#000"/></svg></button>
            <button aria-label="Clean screen"><svg viewBox="0 0 18 18"><path d="M2 3h14v13H2z" fill="#eee" stroke="#333"/><path d="M2 4h14" stroke="#333" stroke-width="3"/></svg></button>
        </div>
    </footer>

    <script>
        // Zone ticks and labels around the sheet border
        const ruler = document.getElementById('ruler');
        let marks = '';

        function tick(x, y, w, h) {
            marks += `<path class="k" d="M${x} ${y}${w ? 'h' + w : 'v' + h}"/>`;
        }

        function label(x, y, text) {
            marks += `<text class="num" x="${x}" y="${y}">${text}</text>`;
        }

        for (let n = 1; n <= 16; n++) {
            const x = Math.round(231 + (n - 1) * 73.5);
            label(x, 144, n);
            if (n !== 8 && n !== 9) {
                label(x, 966, n);
            }
            if (n < 16) {
                const t = Math.round(268 + (n - 1) * 73.5) - 0.5;
                tick(t, 139, 0, 7);
                if (n !== 8) {
                    tick(t, 959, 0, 7);
                }
            }
        }

        'ABCDEFGH'.split('').forEach((letter, i) => {
            const y = Math.round(196 + i * 101.6);
            label(190, y + 3, letter);
            label(1373, y + 3, letter);
            if (i < 7) {
                const t = Math.round(246 + i * 101.8) + 0.5;
                tick(187, t, 7, 0);
                tick(1370, t, 7, 0);
            }
        });

        ruler.innerHTML = marks;
    </script>
</body>
</html>
```

FILE: styles.css
```css
* {
    margin: 0;
    padding: 0;
    box-sizing: border-box;
}

body {
    font-family: 'Noto Sans', 'Open Sans', sans-serif;
    font-size: 11px;
    height: 100vh;
    display: flex;
    flex-direction: column;
    overflow: hidden;
    background: #676767;
    color: #111;
}

button {
    display: flex;
    align-items: center;
    justify-content: center;
    flex: none;
    border: none;
    background: none;
}

button svg {
    display: block;
    flex: none;
    overflow: visible;
}

.defs {
    position: absolute;
    width: 0;
    height: 0;
}

/* Title bar */
.titlebar {
    display: flex;
    height: 24px;
    background: #fff;
    border-bottom: 2px solid #3a3a3a;
}

.app {
    width: 35px;
    gap: 8px;
    background: linear-gradient(#8a8a8a, #666);
    border-right: 1px solid #333;
}

.logo {
    font-size: 18px;
    line-height: 20px;
    font-weight: 900;
    color: #c8191c;
}

.app svg {
    margin-top: 8px;
}

.quick {
    display: flex;
    width: 145px;
    padding: 0 8px;
    background: linear-gradient(#8f8f8f, #b5b5b5);
    border-top: 1px solid #444;
    border-right: 1px solid #444;
}

.quick button {
    width: 22px;
}

.quick svg {
    width: 16px;
    height: 16px;
}

.topline {
    flex: 1;
    display: flex;
    justify-content: center;
    padding-left: 56px;
}

.topline span {
    width: 241px;
    height: 1px;
    background: linear-gradient(90deg, #3a7ca8 20%, #222 20%);
}

.info {
    display: flex;
    height: 19px;
    margin-right: 15px;
    border: 1px solid #222;
    background: linear-gradient(#c4c4c4, #949494);
}

.info button + button {
    border-left: 1px solid #444;
}

.info .wide {
    width: 24px;
}

.info .thin {
    width: 8px;
}

.info .wide svg {
    width: 14px;
    height: 14px;
}

.info .thin svg {
    width: 6px;
    height: 14px;
}

.winbtns {
    display: flex;
    padding-bottom: 2px;
}

.winbtns button {
    width: 46px;
}

.winbtns svg {
    width: 12px;
    height: 12px;
}

/* Toolbars */
.bars {
    padding-bottom: 4px;
}

.bar {
    display: flex;
    height: 39px;
    margin-bottom: 3px;
}

.bar + .bar {
    margin-bottom: 0;
    height: 40px;
    border-top: 1px solid #3a3a3a;
}

.grip {
    width: 8px;
    background: radial-gradient(#999 1px, transparent 1px) 0 0 / 3px 3px, #484848;
    border-bottom: 1px solid #3a3a3a;
}

.grip.mid {
    width: 10px;
}

.tools {
    display: flex;
    background: #ebebeb;
    border-bottom: 1px solid #3a3a3a;
}

.tools button {
    width: 39px;
}

.tools svg {
    width: 32px;
    height: 32px;
}

.tools .hist {
    width: 35px;
}

.tools .hist svg {
    width: 24px;
}

.tools .drop {
    width: 12px;
}

.tools .drop.last {
    width: 14px;
}

.tools .drop svg {
    width: 10px;
}

.sep {
    width: 2px;
    margin: 2px;
    background: linear-gradient(90deg, #777 50%, #fff 50%);
}

.field {
    position: relative;
    display: flex;
    align-items: center;
    align-self: flex-start;
    height: 21px;
    background: #e2e2e2;
    border: 1px solid #c2c2c2;
    border-bottom-color: #999;
}

/* empty body of the combo under its drop-down */
.field::before {
    content: "";
    position: absolute;
    left: 0;
    top: 20px;
    height: 15px;
    border-left: 1px solid #888;
}

.field::after {
    content: "";
    position: absolute;
    right: 4px;
    top: 5px;
    width: 5px;
    height: 5px;
    border: solid #555;
    border-width: 0 1px 1px 0;
    transform: rotate(45deg);
    pointer-events: none;
}

.field select {
    flex: 1;
    min-width: 0;
    height: 100%;
    border: none;
    background: none;
    appearance: none;
    font: inherit;
    color: inherit;
}

.styles .field {
    width: 119px;
    padding-left: 17px;
}

.styles .field.near {
    padding-left: 8px;
}

.styles button {
    width: 46px;
    padding-left: 4px;
    border-left: 1px solid #777;
}

.styles button:first-child {
    width: 40px;
    padding: 0;
    border: none;
}

.layer {
    width: 301px;
    padding-left: 7px;
}

.tools .layer svg {
    flex: none;
    width: 64px;
    height: 18px;
}

.swatch {
    flex: none;
    width: 10px;
    height: 10px;
    margin-right: 5px;
    background: #000;
}

.rule {
    flex: none;
    height: 1px;
    margin: 0 4px;
    background: #111;
}

.props {
    gap: 7px;
    padding-left: 2px;
}

/* divider between neighbouring property combos */
.props .field + .field::before {
    left: -5px;
    top: -1px;
    width: 6px;
    height: 36px;
    border-right: 1px solid #888;
}

.color {
    width: 149px;
    padding-left: 4px;
}

.ltype {
    width: 159px;
}

.ltype .rule {
    width: 60px;
}

.lweight {
    width: 124px;
}

.lweight .rule {
    width: 35px;
}

.plot {
    width: 118px;
    padding-left: 8px;
}

/* Icon paints */
.w {
    fill: url(#paper);
    stroke: #555;
}

.l {
    fill: none;
    stroke: #555;
}

.g {
    fill: url(#shade);
    stroke: #4a4a4a;
}

.s {
    fill: none;
    stroke: #555;
}

.n {
    fill: #fff;
    stroke: #222;
}

.b {
    fill: url(#sky);
    stroke: #2d5f8a;
}

.stack {
    fill: #f4f4f4;
    stroke: #555;
}

.stack.blue {
    fill: #cfe6f5;
    stroke: #3c6688;
}

.glyph {
    font: 700 26px 'Liberation Sans', sans-serif;
    text-anchor: middle;
    fill: #3c4248;
}

.qmark {
    font: 700 25px 'Liberation Sans', sans-serif;
    text-anchor: middle;
    fill: #fff;
}

.big {
    font: 38px 'Liberation Sans', sans-serif;
    text-anchor: middle;
    fill: #444;
    stroke: #444;
}

/* Work area */
.work {
    flex: 1;
    display: flex;
    min-height: 0;
    border-top: 1px solid #4a4a4a;
}

.dock {
    flex: none;
    width: 45px;
    background: #626262;
}

.dock.right {
    width: 48px;
    padding-left: 5px;
}

.palette {
    width: 40px;
    background: #ececec;
    border: solid #333;
    border-width: 0 1px 1px;
}

.palette button {
    width: 38px;
    height: 38px;
}

.palette svg {
    width: 32px;
    height: 32px;
}

.cap {
    display: block;
    height: 8px;
    background: radial-gradient(#aaa 1px, transparent 1px) 2px 1px / 3px 3px, #4c4c4c;
}

.modify + .modify .cap {
    height: 9px;
}

.view {
    flex: 1;
    position: relative;
    min-width: 0;
    margin-bottom: 5px;
    background: #a8a8a8;
    border-left: 1px solid #444;
    border-right: 2px solid #f0f0f0;
    border-bottom: 1px solid #f0f0f0;
}

.sheet {
    display: block;
    position: absolute;
    inset: 0;
}

.docbtns {
    position: absolute;
    top: 7px;
    right: 9px;
    display: flex;
    gap: 5px;
}

.docbtns svg {
    width: 14px;
    height: 14px;
}

.k {
    fill: none;
    stroke: #000;
}

.dash {
    fill: none;
    stroke: #000;
    stroke-dasharray: 15 10;
}

.navy {
    fill: none;
    stroke: #1c1c78;
}

.ucs {
    fill: none;
    stroke: #1a14c0;
}

.axis {
    font: 300 21px 'Open Sans', sans-serif;
    text-anchor: middle;
    fill: #1a14c0;
}

.num {
    font: 9px 'Liberation Sans', sans-serif;
    text-anchor: middle;
    fill: #000;
}

.mark {
    font: 10px 'Liberation Sans', sans-serif;
    text-anchor: middle;
    fill: #000;
}

.tiny {
    font: 5px 'Liberation Sans', sans-serif;
    fill: #000;
}

/* Command window */
.command {
    display: flex;
    height: 59px;
    background: #fff;
    font: 13px 'Liberation Mono', monospace;
    color: #333;
}

.handle {
    width: 15px;
    background: radial-gradient(#444 1px, transparent 1px) 2px 2px / 3px 3px repeat-x, #a2a2a2;
}

.console {
    flex: 1;
    display: flex;
    flex-direction: column;
}

.history {
    display: flex;
    height: 41px;
    border-bottom: 1px solid #999;
}

.log {
    flex: 1;
    padding: 1px 2px;
    line-height: 16px;
    border-bottom: 1px solid #e6e6e6;
    margin-bottom: 3px;
}

.vscroll {
    width: 17px;
    display: flex;
    flex-direction: column;
    justify-content: space-between;
    background: #efefef;
}

.vscroll button {
    width: 17px;
    height: 17px;
}

.prompt {
    flex: 1;
    display: flex;
    align-items: center;
    padding-left: 2px;
}

.prompt input {
    flex: 1;
    border: none;
    outline: none;
    font: inherit;
}

.hscroll {
    display: flex;
    align-self: stretch;
    width: 86px;
    background: #efefef;
}

.hscroll button {
    width: 19px;
}

.hscroll i {
    width: 17px;
    margin-right: 15px;
    background: #c8c8c8;
}

.command svg {
    width: 10px;
    height: 10px;
    fill: none;
    stroke: #444;
    stroke-width: 2;
}

/* Status bar */
.status {
    display: flex;
    height: 23px;
    padding-right: 4px;
    background: linear-gradient(#8d8d8d, #757575);
    border-top: 1px solid #222;
    border-bottom: 2px solid #333;
}

.coords {
    width: 148px;
    padding-left: 12px;
    font: 11px 'Liberation Sans', sans-serif;
    line-height: 22px;
}

.group {
    display: flex;
    background: linear-gradient(#b4b4b4, #9a9a9a);
}

.group button {
    width: 22px;
    border-right: 1px solid #555;
}

.group svg {
    width: 18px;
    height: 18px;
}

.group .on {
    background: linear-gradient(#b5dbe6, #d3eef4);
}

.group .rose {
    background: #b9a9a9;
}

.group .arrow {
    width: 14px;
}

.group .arrow svg {
    width: 10px;
}

.push {
    margin-left: auto;
}

.gap {
    margin-left: 11px;
}

.gap2 {
    margin-left: 24px;
}

.gap3 {
    margin-left: 6px;
}

.lone {
    padding: 0 13px;
}
```
